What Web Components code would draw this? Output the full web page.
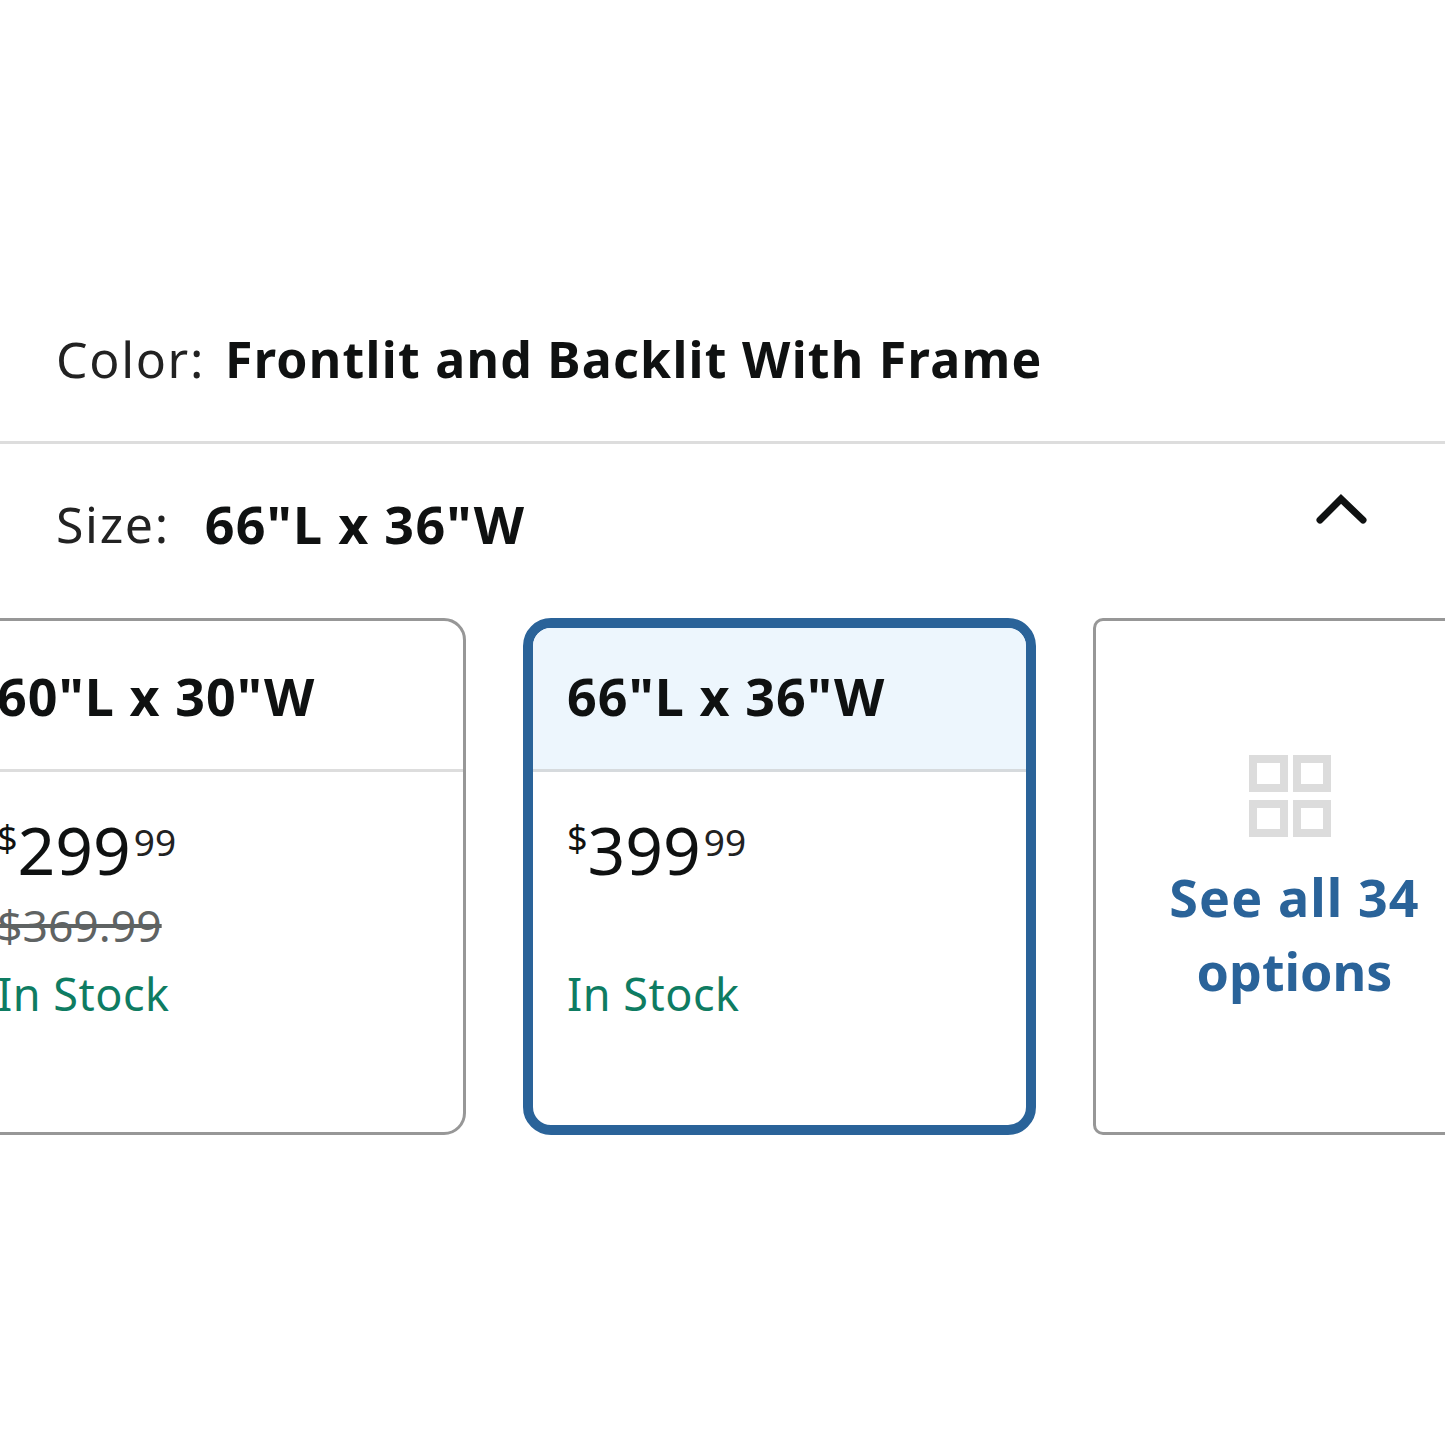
<!DOCTYPE html>
<html><head><meta charset="utf-8"><style>
html,body{margin:0;padding:0;background:#fff;overflow:hidden}
body{width:1445px;height:1445px;font-family:"Noto Sans","Open Sans",sans-serif;color:#0f1111}
</style></head><body>
<template id="t-row"><style>
:host{display:flex;align-items:center;box-sizing:border-box;padding:0 56px;font-size:50px;line-height:60px}
.l{color:#222;letter-spacing:1.65px}
.v{font-weight:700;color:#0f1111;font-size:var(--vs,50px);letter-spacing:var(--ls,1.27px);margin-left:var(--g,24px)}
.e{margin-left:auto;display:flex}
</style><span class="l"><slot name="label"></slot></span><span class="v"><slot name="value"></slot></span><span class="e"><slot name="end"></slot></span></template>

<template id="t-card"><style>
:host{display:flex;flex-direction:column;flex:none;box-sizing:border-box;width:512px;height:517px;border:3px solid #979797;border-radius:22px;background:#fff;overflow:hidden}
:host([selected]){border:10px solid #2a6399;border-radius:28px;width:513px;margin-left:-1px}
.h{height:151px;flex:none;box-sizing:border-box;padding:0 40px;display:flex;align-items:center;font-weight:700;font-size:52px;border-bottom:3px solid #ddd;white-space:nowrap;letter-spacing:1.1px}
:host([selected]) .h{background:#edf6fd;height:144px;padding:0 34px 6px;border-bottom-color:#d6dadd}
.b{padding:0 40px;display:flex;flex-direction:column}
:host([selected]) .b{padding:0 34px}
.p{display:flex;align-items:flex-start;height:80px;margin-top:38px;line-height:1;white-space:nowrap}
.c{font-size:36px;margin-top:10px;margin-right:0}
.m{font-size:66px;line-height:78px}
.s{font-size:37px;margin-top:13px;margin-left:3px;color:#222}
.o{height:70px;font-size:44.5px;line-height:70px;color:#5f6363;text-decoration:line-through}
.k{font-size:45px;line-height:68px;color:#0e7c62;letter-spacing:.5px}
</style><div class="h"><slot name="size"></slot></div><div class="b"><div class="p"><span class="c">$</span><span class="m"><slot name="whole"></slot></span><span class="s"><slot name="cents"></slot></span></div><div class="o"><slot name="old"></slot></div><div class="k"><slot name="stock"></slot></div></div></template>

<template id="t-all"><style>
:host{display:flex;flex-direction:column;align-items:center;flex:none;box-sizing:border-box;width:404px;height:517px;margin-left:-1px;border:3px solid #979797;border-right:0;border-radius:10px 0 0 10px;padding:134px 4px 0 0;background:#fff}
.i{display:block;width:82px;height:82px;margin-left:-9px}
.t{margin-top:23px;font-weight:700;font-size:52px;line-height:74px;color:#2a6399;text-align:center;white-space:nowrap;letter-spacing:1.1px}
::slotted(span){letter-spacing:0}
</style><svg class="i" viewBox="0 0 82 82" fill="none" stroke="#dcdcdc" stroke-width="8"><rect x="4" y="4" width="31" height="29"/><rect x="48" y="4" width="30" height="29"/><rect x="4" y="49" width="31" height="29"/><rect x="48" y="49" width="30" height="29"/></svg><div class="t"><slot></slot></div></template>

<template id="t-strip"><style>
:host{display:flex;gap:58px;margin-left:-46px;width:1491px;overflow:hidden;height:518px}
</style><slot></slot></template>

<template id="t-page"><style>
:host{display:block;padding-top:329px}
.d{height:3px;background:#ddd;margin-top:52px}
</style><slot name="color"></slot><div class="d"></div><div style="height:50px"></div><slot name="size"></slot><div style="height:64px"></div><slot name="strip"></slot></template>

<v-page>
<v-row slot="color" style="--g:20px"><span slot="label">Color:</span><span slot="value">Frontlit and Backlit With Frame</span></v-row>
<v-row slot="size" style="--g:35px;--vs:52px;--ls:1.3px"><span slot="label">Size:</span><span slot="value">66"L x 36"W</span><svg slot="end" width="54" height="36" viewBox="0 0 54 36" fill="none" stroke="#0f1111" stroke-width="7" stroke-linecap="round" stroke-linejoin="miter" style="margin:-30px 20px 0 0"><path d="M5 29 L26 8 L48 29"/></svg></v-row>
<v-strip slot="strip">
<v-card><span slot="size">60"L x 30"W</span><span slot="whole">299</span><span slot="cents">99</span><span slot="old">$369.99</span><span slot="stock">In Stock</span></v-card>
<v-card selected><span slot="size">66"L x 36"W</span><span slot="whole">399</span><span slot="cents">99</span><span slot="stock">In Stock</span></v-card>
<v-all>See all 34<br><span>options</span></v-all>
</v-strip>
</v-page>
<script>
for (const [n,id] of [['v-page','t-page'],['v-row','t-row'],['v-strip','t-strip'],['v-card','t-card'],['v-all','t-all']]) {
  customElements.define(n, class extends HTMLElement {
    constructor(){super();this.attachShadow({mode:'open'}).appendChild(document.getElementById(id).content.cloneNode(true));}
  });
}
</script>
</body></html>
